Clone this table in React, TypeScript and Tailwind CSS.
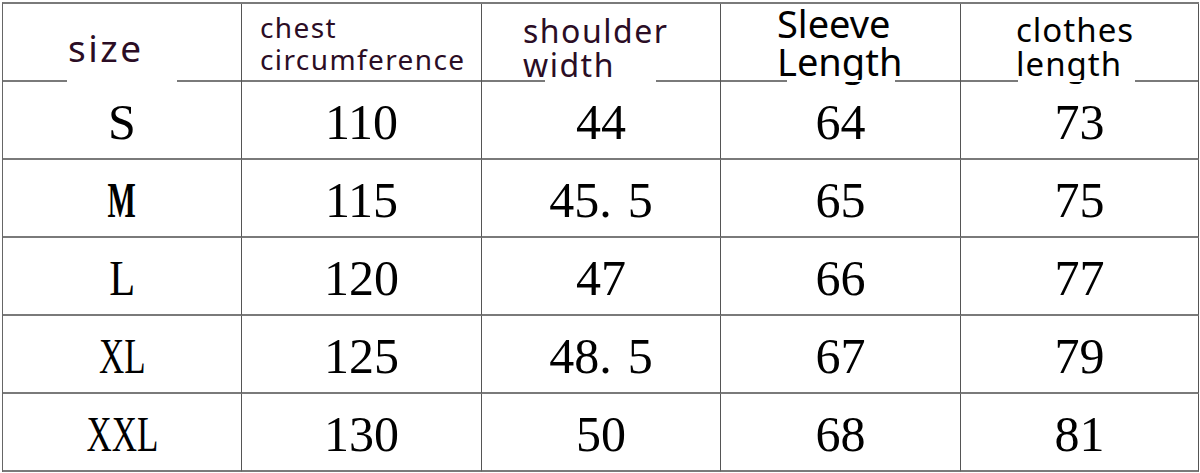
import React from "react";

const H = "bg-[#7a7a7a]";

function Seg({ parts }: { parts: Array<[number | "flex", boolean]> }) {
  return (
    <div className="flex h-[2px] w-full">
      {parts.map(([w, on], i) => (
        <div
          key={i}
          className={(w === "flex" ? "flex-1 " : "") + (on ? H : "bg-white")}
          style={w === "flex" ? undefined : { width: w }}
        />
      ))}
    </div>
  );
}

const rows: Array<{ size: React.ReactNode; v: React.ReactNode[] }> = [
  { size: <span>S</span>, v: ["110", "44", "64", "73"] },
  {
    size: <span className="inline-block font-bold scale-x-[0.6]">M</span>,
    v: [
      "115",
      <span key="a">
        45<span className="mr-[16px]">.</span>5
      </span>,
      "65",
      "75",
    ],
  },
  { size: <span className="inline-block scale-x-[0.85]">L</span>, v: ["120", "47", "66", "77"] },
  {
    size: <span className="inline-block scale-x-[0.7]">XL</span>,
    v: [
      "125",
      <span key="b">
        48<span className="mr-[16px]">.</span>5
      </span>,
      "67",
      "79",
    ],
  },
  { size: <span className="inline-block scale-x-[0.7]">XXL</span>, v: ["130", "50", "68", "81"] },
];

const sans = "font-['Noto_Sans',sans-serif]";
const serif = "font-['Liberation_Serif',serif]";
const cell = `h-[78px] border-r border-b-2 border-r-[#555] border-b-[#7a7a7a] flex justify-center pt-[15px] ${serif} text-[50px] leading-[50px] text-black`;

export default function App() {
  return (
    <div className="w-[1200px] h-[473px] bg-white overflow-hidden">
      <div className="ml-[2px] mt-[2px] w-[1197px] border-l border-t-2 border-l-[#666] border-t-[#7a7a7a]">
        <div className="grid grid-cols-[239px_240px_239px_240px_238px]">
          {/* header */}
          <div className="flex flex-col border-r border-[#555]">
            <div className={`h-[76px] pt-[24px] pl-[65px] ${sans} text-[37px] leading-[40px] tracking-[2.5px] text-[#2b0d25]`}>
              size
            </div>
            <Seg parts={[[64, true], [110, false], ["flex", true]]} />
          </div>
          <div className="flex flex-col border-r border-[#555]">
            <div className={`h-[76px] pt-[7px] pl-[18px] ${sans} text-[28px] leading-[32px] tracking-[1.4px] text-[#2b0d25]`}>
              <div>chest</div>
              <div>circumference</div>
            </div>
            <Seg parts={[["flex", true]]} />
          </div>
          <div className="flex flex-col border-r border-[#555]">
            <div className={`h-[76px] pt-[10px] pl-[41px] ${sans} text-[32px] leading-[34px] tracking-[1.5px] text-[#2b0d25]`}>
              <div>shoulder</div>
              <div>width</div>
            </div>
            <Seg parts={[[63, true], [111, false], ["flex", true]]} />
          </div>
          <div className="flex flex-col border-r border-[#555]">
            <div className={`h-[76px] pl-[56px] ${sans} text-[38px] leading-[38px] text-black`}>
              <div>Sleeve</div>
              <div>Length</div>
            </div>
            <Seg parts={[[66, true], [108, false], ["flex", true]]} />
          </div>
          <div className="flex flex-col border-r border-[#555]">
            <div className={`h-[76px] pt-[9px] pl-[55px] ${sans} text-[33px] leading-[34px] tracking-[1px] text-black`}>
              <div>clothes</div>
              <div>length</div>
            </div>
            <Seg parts={[[57, true], [117, false], ["flex", true]]} />
          </div>

          {/* body */}
          {rows.map((r, ri) => (
            <React.Fragment key={ri}>
              <div className={cell}>{r.size}</div>
              {r.v.map((val, vi) => (
                <div key={vi} className={cell}>
                  {val}
                </div>
              ))}
            </React.Fragment>
          ))}
        </div>
      </div>
    </div>
  );
}
